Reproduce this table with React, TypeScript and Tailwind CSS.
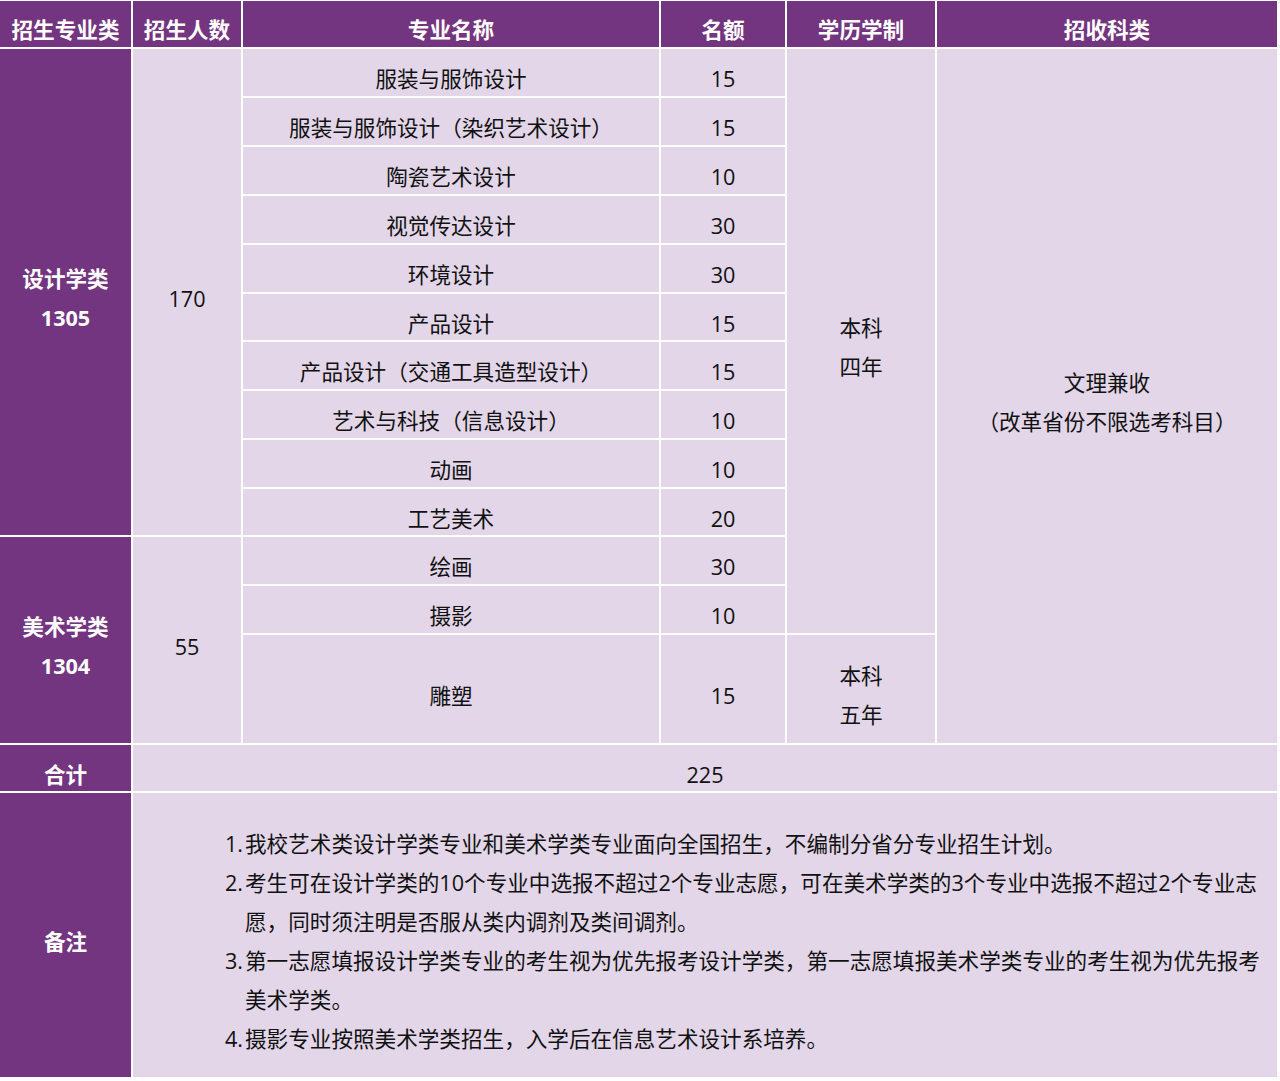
import { ReactNode } from 'react';

const PURPLE = 'bg-[#733480]';
const LIGHT = 'bg-[#e2d6e8]';

const majors: [string, string][] = [
    ['服装与服饰设计', '15'],
    ['服装与服饰设计（染织艺术设计）', '15'],
    ['陶瓷艺术设计', '10'],
    ['视觉传达设计', '30'],
    ['环境设计', '30'],
    ['产品设计', '15'],
    ['产品设计（交通工具造型设计）', '15'],
    ['艺术与科技（信息设计）', '10'],
    ['动画', '10'],
    ['工艺美术', '20'],
    ['绘画', '30'],
    ['摄影', '10'],
    ['雕塑', '15'],
];

// extra top padding nudges the CJK glyphs down to where the reference sits
const Head = ({ children }: { children: ReactNode }) => (
    <div className={`${PURPLE} flex items-center justify-center pt-[10px] font-bold text-white`}>{children}</div>
);

const Cell = ({ children, className = '' }: { children?: ReactNode; className?: string }) => (
    <div className={`${LIGHT} flex items-center justify-center pt-[12px] text-[#111] ${className}`}>{children}</div>
);

const notes: { n: string; lines: string[] }[] = [
    { n: '1.', lines: ['我校艺术类设计学类专业和美术学类专业面向全国招生，不编制分省分专业招生计划。'] },
    {
        n: '2.',
        lines: [
            '考生可在设计学类的10个专业中选报不超过2个专业志愿，可在美术学类的3个专业中选报不超过2个专业志',
            '愿，同时须注明是否服从类内调剂及类间调剂。',
        ],
    },
    {
        n: '3.',
        lines: [
            '第一志愿填报设计学类专业的考生视为优先报考设计学类，第一志愿填报美术学类专业的考生视为优先报考',
            '美术学类。',
        ],
    },
    { n: '4.', lines: ['摄影专业按照美术学类招生，入学后在信息艺术设计系培养。'] },
];

export default function App() {
    return (
        <div
            className="h-[1081px] w-[1280px] overflow-hidden bg-white pt-px text-[21.6px] leading-[39px]"
            style={{ fontFamily: '"Open Sans", "Noto Sans CJK SC", sans-serif' }}
        >
            <div className="grid w-[1277px] grid-cols-[131px_108px_416px_124px_148px_340px] grid-rows-[46px_47px_47px_47px_47px_47px_46px_47px_47px_47px_46px_47px_47px_108px_46px_284px] gap-[2px]">
                <Head>招生专业类</Head>
                <Head>招生人数</Head>
                <Head>专业名称</Head>
                <Head>名额</Head>
                <Head>学历学制</Head>
                <Head>招收科类</Head>

                <div className={`${PURPLE} col-start-1 row-start-2 row-span-10 flex flex-col items-center justify-center pt-[12px] font-bold text-white`}>
                    <span>设计学类</span>
                    <span>1305</span>
                </div>
                <Cell className="col-start-2 row-start-2 row-span-10">170</Cell>

                <div className={`${PURPLE} col-start-1 row-start-12 row-span-3 flex flex-col items-center justify-center pt-[12px] font-bold text-white`}>
                    <span>美术学类</span>
                    <span>1304</span>
                </div>
                <Cell className="col-start-2 row-start-12 row-span-3">55</Cell>

                {majors.map(([name, count]) => (
                    <div key={name} className="contents">
                        <Cell className="col-start-3">{name}</Cell>
                        <Cell className="col-start-4">{count}</Cell>
                    </div>
                ))}

                <Cell className="col-start-5 row-start-2 row-span-12 flex-col">
                    <span>本科</span>
                    <span>四年</span>
                </Cell>
                <Cell className="col-start-5 row-start-14 flex-col">
                    <span>本科</span>
                    <span>五年</span>
                </Cell>
                <Cell className="col-start-6 row-start-2 row-span-13 flex-col">
                    <span>文理兼收</span>
                    <span>（改革省份不限选考科目）</span>
                </Cell>

                <div className={`${PURPLE} col-start-1 row-start-15 flex items-center justify-center pt-[12px] font-bold text-white`}>合计</div>
                <Cell className="col-span-5 col-start-2 row-start-15">225</Cell>

                <div className={`${PURPLE} col-start-1 row-start-16 flex items-center justify-center pt-[12px] font-bold text-white`}>备注</div>
                <div className={`${LIGHT} col-span-5 col-start-2 row-start-16 flex flex-col justify-center pl-[92px] pt-[12px] text-[#111]`}>
                    {notes.map((note) => (
                        <div key={note.n} className="flex">
                            <span className="w-[20px] shrink-0">{note.n}</span>
                            <div className="flex flex-col whitespace-nowrap">
                                {note.lines.map((l) => (
                                    <span key={l}>{l}</span>
                                ))}
                            </div>
                        </div>
                    ))}
                </div>
            </div>
        </div>
    );
}
